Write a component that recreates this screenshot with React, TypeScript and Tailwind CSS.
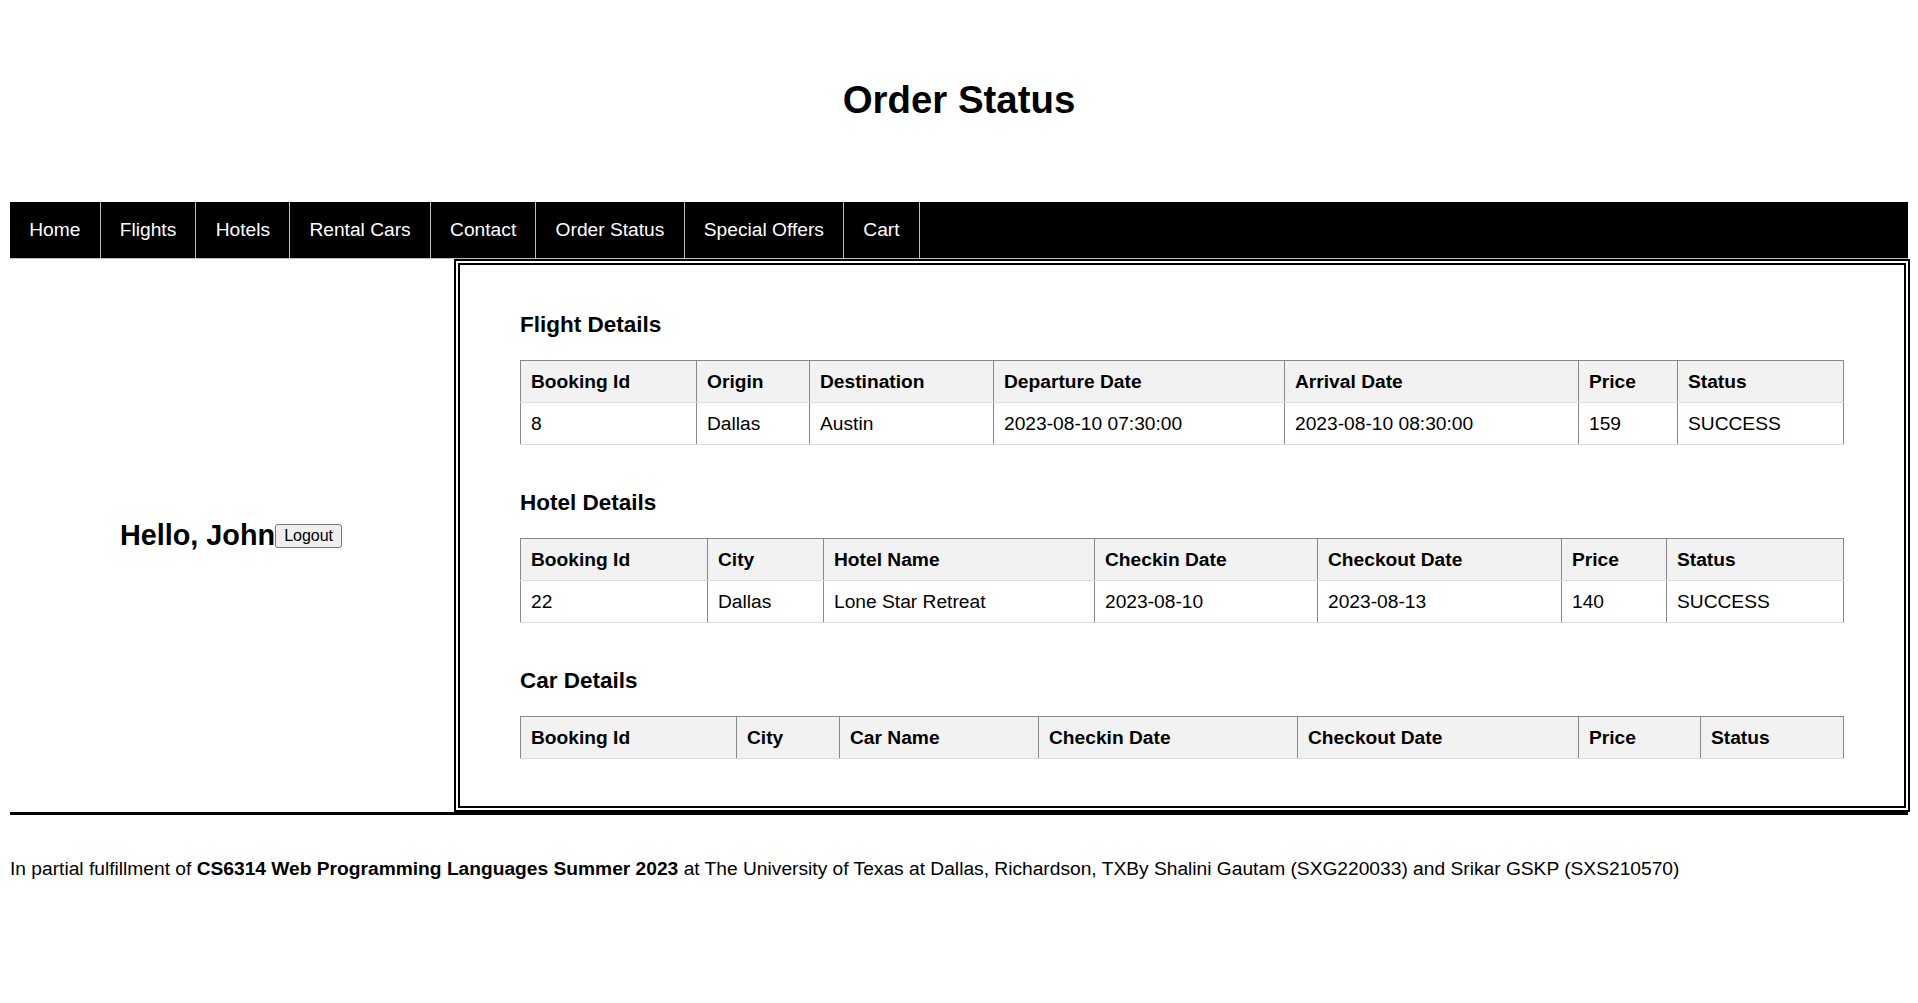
import React from "react";

type Table = {
  title: string;
  cols: { label: string; w: string }[];
  rows: string[][];
};

const navItems = [
  "Home",
  "Flights",
  "Hotels",
  "Rental Cars",
  "Contact",
  "Order Status",
  "Special Offers",
  "Cart",
];

const tables: Table[] = [
  {
    title: "Flight Details",
    cols: [
      { label: "Booking Id", w: "w-[176px]" },
      { label: "Origin", w: "w-[113px]" },
      { label: "Destination", w: "w-[184px]" },
      { label: "Departure Date", w: "w-[291px]" },
      { label: "Arrival Date", w: "w-[294px]" },
      { label: "Price", w: "w-[99px]" },
      { label: "Status", w: "w-[166px]" },
    ],
    rows: [
      [
        "8",
        "Dallas",
        "Austin",
        "2023-08-10 07:30:00",
        "2023-08-10 08:30:00",
        "159",
        "SUCCESS",
      ],
    ],
  },
  {
    title: "Hotel Details",
    cols: [
      { label: "Booking Id", w: "w-[187px]" },
      { label: "City", w: "w-[116px]" },
      { label: "Hotel Name", w: "w-[271px]" },
      { label: "Checkin Date", w: "w-[223px]" },
      { label: "Checkout Date", w: "w-[244px]" },
      { label: "Price", w: "w-[105px]" },
      { label: "Status", w: "w-[177px]" },
    ],
    rows: [
      [
        "22",
        "Dallas",
        "Lone Star Retreat",
        "2023-08-10",
        "2023-08-13",
        "140",
        "SUCCESS",
      ],
    ],
  },
  {
    title: "Car Details",
    cols: [
      { label: "Booking Id", w: "w-[216px]" },
      { label: "City", w: "w-[103px]" },
      { label: "Car Name", w: "w-[199px]" },
      { label: "Checkin Date", w: "w-[259px]" },
      { label: "Checkout Date", w: "w-[281px]" },
      { label: "Price", w: "w-[122px]" },
      { label: "Status", w: "w-[143px]" },
    ],
    rows: [],
  },
];

const DetailsTable = ({ table }: { table: Table }) => (
  <div className="flex flex-col gap-[22px]">
    <h3 className="text-[22.5px] leading-[26px] font-bold">{table.title}</h3>
    <table className="w-full border-collapse text-left table-fixed">
      <thead>
        <tr>
          {table.cols.map((col) => (
            <th
              key={col.label}
              className={`${col.w} h-[42px] px-[10px] py-0 font-bold bg-[#f2f2f2] border border-[#888] border-b-[#ddd] leading-[22px]`}
            >
              {col.label}
            </th>
          ))}
        </tr>
      </thead>
      <tbody>
        {table.rows.map((row, i) => (
          <tr key={i}>
            {row.map((cell, j) => (
              <td
                key={j}
                className="h-[42px] px-[10px] py-0 border-x border-[#888] border-b border-b-[#ddd] leading-[22px]"
              >
                {cell}
              </td>
            ))}
          </tr>
        ))}
      </tbody>
    </table>
  </div>
);

export default function App() {
  return (
    <div className="min-h-screen bg-white text-black font-['Liberation_Sans',Arial,sans-serif] text-[19.2px] px-[10px]">
      <header className="h-[202px] pt-[78px]">
        <h1 className="text-center text-[38.4px] leading-[44px] font-bold">
          Order Status
        </h1>
      </header>

      <nav className="bg-black border-b border-[#bbb]">
        <ul className="flex">
          {navItems.map((item) => (
            <li
              key={item}
              className="border-r border-[#bbb] px-[19.2px] h-[56px] flex items-center text-white leading-[22px]"
            >
              {item}
            </li>
          ))}
        </ul>
      </nav>

      <div className="flex border-b-[3px] border-black">
        <aside className="w-[444px] shrink-0 flex items-center justify-center">
          <h2 className="flex items-center text-[28.8px] leading-[33px] font-bold pr-[2px]">
            Hello, John
            <button className="h-[24px] px-[8px] text-[16px] leading-[18px] font-normal bg-[#efefef] border border-[#767676] rounded-[3px]">
              Logout
            </button>
          </h2>
        </aside>

        <main className="flex-1 border-[6px] border-double border-black px-[60px] pt-[47px] pb-[47px] flex flex-col gap-[45px]">
          {tables.map((t) => (
            <DetailsTable key={t.title} table={t} />
          ))}
        </main>
      </div>

      <footer className="mt-[43px] leading-[22px]">
        In partial fulfillment of{" "}
        <b>CS6314 Web Programming Languages Summer 2023</b> at The University
        of Texas at Dallas, Richardson, TXBy Shalini Gautam (SXG220033) and
        Srikar GSKP (SXS210570)
      </footer>
    </div>
  );
}
